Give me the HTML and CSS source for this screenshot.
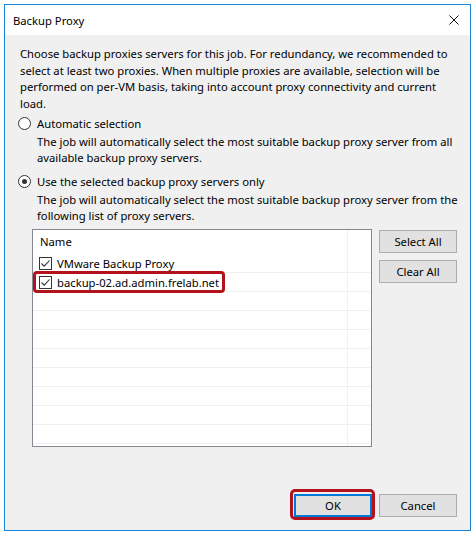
FILE: index.html
```html
<!DOCTYPE html>
<html lang="en">
  <head>
    <meta charset="UTF-8" />
    <title>Backup Proxy</title>
    <link rel="stylesheet" href="styles.css">
  </head>
  <body>
    <div class="window">
      <div class="titlebar">
        <span class="title">Backup Proxy</span>
        <svg class="close" width="10" height="10" viewBox="0 0 10 10">
          <path d="M0.5 0.5 L9.5 9.5 M9.5 0.5 L0.5 9.5" stroke="#111" stroke-width="1" fill="none" />
        </svg>
      </div>

      <div class="content">
        <p class="intro">
          Choose backup proxies servers for this job. For redundancy, we recommended to<br>
          select at least two proxies. When multiple proxies are available, selection will be<br>
          performed on per-VM basis, taking into account proxy connectivity and current<br>
          load.
        </p>

        <div class="radio-row first">
          <span class="radio"></span>
          <span>Automatic selection</span>
        </div>
        <p class="desc">
          The job will automatically select the most suitable backup proxy server from all<br>
          available backup proxy servers.
        </p>

        <div class="radio-row second">
          <span class="radio checked"></span>
          <span>Use the selected backup proxy servers only</span>
        </div>
        <p class="desc">
          The job will automatically select the most suitable backup proxy server from the<br>
          following list of proxy servers.
        </p>

        <div class="list-area">
          <div class="list">
            <div class="list-header">Name</div>
            <div class="list-row">
              <span class="item">
                <span class="checkbox"><svg width="11" height="11" viewBox="0 0 11 11"><path d="M1.5 5.5 L4.2 8.2 L9.5 2.5" stroke="#333" stroke-width="1.1" fill="none" /></svg></span>
                VMware Backup Proxy
              </span>
            </div>
            <div class="list-row">
              <span class="item marked">
                <span class="checkbox"><svg width="11" height="11" viewBox="0 0 11 11"><path d="M1.5 5.5 L4.2 8.2 L9.5 2.5" stroke="#333" stroke-width="1.1" fill="none" /></svg></span>
                backup-02.ad.admin.frelab.net
              </span>
            </div>
            <div class="list-row"></div>
            <div class="list-row"></div>
            <div class="list-row"></div>
            <div class="list-row"></div>
            <div class="list-row"></div>
            <div class="list-row"></div>
            <div class="list-row"></div>
            <div class="list-row"></div>
          </div>
          <div class="side-buttons">
            <button class="btn">Select All</button>
            <button class="btn">Clear All</button>
          </div>
        </div>
      </div>

      <div class="footer">
        <button class="btn default marked">OK</button>
        <button class="btn">Cancel</button>
      </div>
    </div>
  </body>
</html>
```

FILE: styles.css
```css
body {
  margin: 0;
  background-color: #fff;
  font-family: "Noto Sans", "Open Sans", sans-serif;
  font-size: 11.25px;
  color: #000;
}

.window {
  margin: 4px;
  width: 465px;
  height: 525px;
  border: 1px solid #1883d7;
  background-color: #f0f0f0;
  display: flex;
  flex-direction: column;
}

.titlebar {
  height: 30px;
  background-color: #fff;
  display: flex;
  align-items: center;
  justify-content: space-between;
  padding: 0 11px 0 8px;
}

.close {
  margin-bottom: 1px;
}

.content {
  padding: 0 12px 0 15px;
  white-space: nowrap;
}

.intro {
  margin: 11px 0 0;
  line-height: 16.5px;
}

.radio-row {
  display: flex;
  align-items: center;
  gap: 6px;
  height: 16px;
  margin-left: -2px;
}

.radio-row.first {
  margin-top: 3px;
}

.radio-row.second {
  margin-top: 7px;
}

.radio {
  width: 11px;
  height: 11px;
  border: 1px solid #333;
  border-radius: 50%;
  background-color: #fff;
  position: relative;
}

.radio.checked::after {
  content: "";
  position: absolute;
  left: 3px;
  top: 3px;
  width: 5px;
  height: 5px;
  border-radius: 50%;
  background-color: #333;
}

.desc {
  margin: 3px 0 0 17px;
  line-height: 16px;
}

.list-area {
  display: flex;
  gap: 7px;
  margin: 5px 0 0 12px;
}

.list {
  flex-shrink: 0;
  width: 338px;
  height: 216px;
  border: 1px solid #828790;
  background-color: #fff;
  overflow: hidden;
  background-image: linear-gradient(#f0f0f0, #f0f0f0);
  background-size: 1px 100%;
  background-position: 314px 0;
  background-repeat: no-repeat;
}

.list-header {
  height: 24px;
  line-height: 24px;
  padding-left: 7px;
}

.list-row {
  height: 18px;
  border-bottom: 1px solid #f0f0f0;
  display: flex;
  align-items: center;
}

.item {
  display: flex;
  align-items: center;
  gap: 5px;
  padding-left: 6px;
  height: 18px;
  position: relative;
}

.checkbox {
  width: 11px;
  height: 11px;
  border: 1px solid #333;
  background-color: #fff;
  display: flex;
}

.item.marked::after {
  content: "";
  position: absolute;
  left: 0;
  right: -6px;
  top: -2px;
  bottom: -2px;
  border: 3px solid #b3121c;
  border-radius: 4px;
}

.side-buttons {
  flex-shrink: 0;
  display: flex;
  flex-direction: column;
  gap: 7px;
  margin-top: 1px;
}

.btn {
  width: 78px;
  height: 23px;
  padding: 0;
  background-color: #e1e1e1;
  border: 1px solid #adadad;
  font-family: inherit;
  font-size: 11.25px;
  color: #000;
}

.btn.default {
  border: 2px solid #0078d7;
}

.btn.marked {
  position: relative;
}

.btn.marked::after {
  content: "";
  position: absolute;
  left: -6px;
  right: -5px;
  top: -7px;
  bottom: -5px;
  border: 3px solid #b3121c;
  border-radius: 5px;
}

.footer {
  margin-top: auto;
  display: flex;
  justify-content: flex-end;
  gap: 7px;
  padding: 0 13px 13px 0;
}
```
